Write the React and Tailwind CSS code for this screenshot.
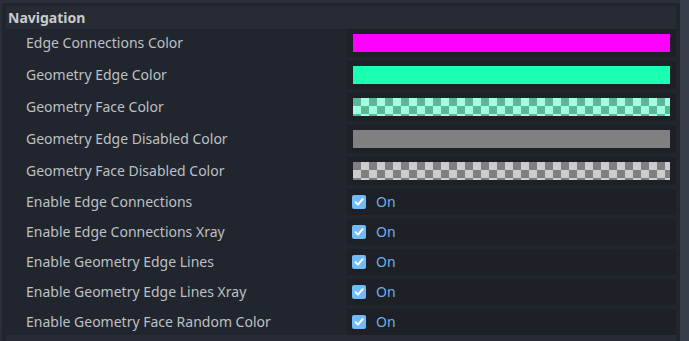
const colorRows = [
  { label: 'Edge Connections Color', swatch: 'bg-[#ff00ff]' },
  { label: 'Geometry Edge Color', swatch: 'bg-[#1affb2]' },
  {
    label: 'Geometry Face Color',
    swatch:
      'bg-[repeating-conic-gradient(#a0ffe0_0%_25%,#5ab896_0%_50%)] bg-[length:16px_16px] bg-[position:0_0]',
  },
  { label: 'Geometry Edge Disabled Color', swatch: 'bg-[#808080]' },
  {
    label: 'Geometry Face Disabled Color',
    swatch:
      'bg-[repeating-conic-gradient(#cccccc_0%_25%,#808080_0%_50%)] bg-[length:16px_16px] bg-[position:0_0]',
  },
];

const checkRows = [
  'Enable Edge Connections',
  'Enable Edge Connections Xray',
  'Enable Geometry Edge Lines',
  'Enable Geometry Edge Lines Xray',
  'Enable Geometry Face Random Color',
];

function CheckIcon() {
  return (
    <span className="flex h-[14px] w-[14px] items-center justify-center rounded-[2px] bg-[#70bbfa]">
      <svg width="10" height="10" viewBox="0 0 10 10">
        <path d="M1.6 5.2 L4 7.6 L8.6 2.2" fill="none" stroke="#fff" strokeWidth="2" strokeLinecap="round" strokeLinejoin="round" />
      </svg>
    </span>
  );
}

export default function App() {
  return (
    <div
      className="flex h-[341px] w-[689px] overflow-hidden bg-[#2a2f39] text-[14px] text-[#bdc0c5]"
      style={{ fontFamily: '"Noto Sans", "Open Sans", sans-serif' }}
    >
      {/* Inspector panel */}
      <div className="ml-[2px] mt-[3px] flex w-[678px] flex-col bg-[#21252d] pl-[4px] pr-[4px] pt-[3px]">
        <div className="flex h-[23px] shrink-0 items-center bg-[#272b34] pl-[2px] font-bold text-[#c9cbcf]">
          Navigation
        </div>

        <div className="flex flex-col gap-[4px]">
          {colorRows.map((row) => (
            <div key={row.label} className="flex h-[28px] shrink-0">
              <div className="flex w-[341px] items-center pl-[20px] leading-none">{row.label}</div>
              <div className="flex flex-1 items-center bg-[#1d2027] px-[6px]">
                <div className={`h-[18px] w-full ${row.swatch}`} />
              </div>
            </div>
          ))}
          {checkRows.map((label) => (
            <div key={label} className="flex h-[26px] shrink-0">
              <div className="flex w-[341px] items-center pl-[20px] leading-none">{label}</div>
              <div className="flex flex-1 items-center gap-[10px] bg-[#1d2027] pl-[5px]">
                <CheckIcon />
                <span className="leading-none text-[#6cb0ef]">On</span>
              </div>
            </div>
          ))}
        </div>

        <div className="flex h-[23px] shrink-0 items-center bg-[#272b34] pl-[21px] font-bold text-[#c9cbcf]">
          Window
        </div>
      </div>

      {/* Scrollbar */}
      <div className="ml-[0px] w-[9px] bg-[#363c48]" />
    </div>
  );
}
